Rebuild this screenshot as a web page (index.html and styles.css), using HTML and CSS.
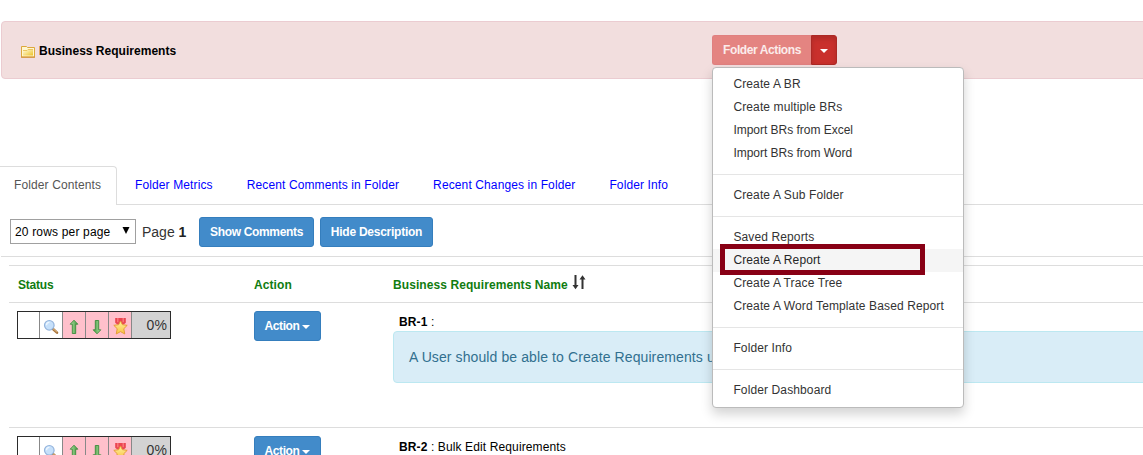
FILE: index.html
```html
<!DOCTYPE html>
<html lang="en">
<head>
<meta charset="utf-8">
<title>Business Requirements</title>
<link rel="stylesheet" href="styles.css">
</head>
<body>
<svg class="defs" width="0" height="0" aria-hidden="true">
  <defs>
    <linearGradient id="gold" x1="0" y1="0" x2="1" y2="1"><stop offset="0" stop-color="#fffbe0"/><stop offset="1" stop-color="#edc327"/></linearGradient>
    <linearGradient id="green" x1="0" y1="0" x2="1" y2="0"><stop offset="0" stop-color="#b4e0a4"/><stop offset="1" stop-color="#3e9a3c"/></linearGradient>
    <linearGradient id="star" x1="0" y1="0" x2="0" y2="1"><stop offset="0" stop-color="#fff3a0"/><stop offset="1" stop-color="#f9c040"/></linearGradient>
    <symbol id="i-zoom" viewBox="0 0 16 16">
      <path d="M10 10l4 3.6" stroke="#a8743c" stroke-width="2.6" stroke-linecap="round"/>
      <path d="M10 9.6l3.6 3.2" stroke="#e3bd85" stroke-width="1" stroke-linecap="round"/>
      <circle cx="6.3" cy="6.3" r="4.8" fill="#c6e0fa" stroke="#94b4dc" stroke-width="1.2"/>
      <path d="M3.4 6.2a3 3 0 0 1 3-2.8" stroke="#eef7ff" stroke-width="1.4" fill="none"/>
    </symbol>
    <symbol id="i-arrow" viewBox="0 0 16 16">
      <path d="M8 1.200L11.800 5.200H9.700v9.300H6.300V5.200H4.200z" fill="url(#green)" stroke="#3d8a3c" stroke-width=".9" stroke-linejoin="round"/>
    </symbol>
    <symbol id="i-medal" viewBox="0 0 16 16">
      <path d="M3 0h10v4.500l-2 1.500H5L3 4.500z" fill="#ea4652"/>
      <path d="M5.500 0v4M10.500 0v4" stroke="#ff8a88" stroke-width="1"/>
      <path d="M8 2.800l1.800 3.500 4.500.6-3.200 3.200.9 4.900L8 12.800 4 15l.9-4.900L1.700 6.900l4.500-.6z" fill="url(#star)" stroke="#e49a34" stroke-width=".9" stroke-linejoin="round"/>
    </symbol>
  </defs>
</svg>

<header class="panel">
  <h1 class="panel-title">
    <svg class="folder" width="14" height="13" viewBox="0 0 14 13">
      <path d="M.5 1.500h5l1 1h7v9.500H.5z" fill="#fff6cf" stroke="#dca83c"/>
      <path d="M2 10.500V5.500h4l1-1h5v6z" fill="url(#gold)"/>
      <path d="M2 5.500h4l1-1h5" fill="none" stroke="#ecc560"/>
      <path d="M0 12.200h14" stroke="#d08b2c"/>
    </svg>
    <span>Business Requirements</span>
  </h1>
  <div class="btn-group">
    <button class="btn danger faded">Folder Actions</button>
    <button class="btn danger toggle"><i class="caret"></i></button>
    <ul class="menu">
      <li>Create A BR</li>
      <li>Create multiple BRs</li>
      <li class="tight">Import BRs from Excel</li>
      <li class="tight">Import BRs from Word</li>
      <li class="divider"></li>
      <li>Create A Sub Folder</li>
      <li class="divider"></li>
      <li>Saved Reports</li>
      <li class="hover">Create A Report<span class="marker"></span></li>
      <li>Create A Trace Tree</li>
      <li>Create A Word Template Based Report</li>
      <li class="divider"></li>
      <li>Folder Info</li>
      <li class="divider"></li>
      <li>Folder Dashboard</li>
    </ul>
  </div>
</header>

<nav class="tabs">
  <a class="tab active">Folder Contents</a>
  <a class="tab">Folder Metrics</a>
  <a class="tab">Recent Comments in Folder</a>
  <a class="tab">Recent Changes in Folder</a>
  <a class="tab">Folder Info</a>
</nav>

<div class="toolbar">
  <div class="select"><span>20 rows per page</span><svg width="8" height="7" viewBox="0 0 8 7"><path d="M.5 0h7L4 7z"/></svg></div>
  <span class="page">Page <b>1</b></span>
  <button class="btn primary show">Show Comments</button>
  <button class="btn primary hide">Hide Description</button>
</div>

<main class="table">
  <div class="row head">
    <div class="status-head">Status</div>
    <div>Action</div>
    <div class="name-head">Business Requirements Name
      <svg width="14" height="15" viewBox="0 0 14 15"><path d="M3.500 0v12M10.500 14V2" stroke="#333" stroke-width="2"/><path d="M.5 10h6L3.500 14.200zM7.500 4.500h6L10.500 .3z" fill="#333"/></svg>
    </div>
  </div>
  <div class="row">
    <div>
      <div class="status">
        <span></span>
        <span><svg width="16" height="16"><use href="#i-zoom"/></svg></span>
        <span class="pink"><svg width="16" height="16"><use href="#i-arrow"/></svg></span>
        <span class="pink"><svg class="down" width="16" height="16"><use href="#i-arrow"/></svg></span>
        <span class="pink"><svg width="17" height="17"><use href="#i-medal"/></svg></span>
        <span class="pct">0%</span>
      </div>
    </div>
    <div><button class="btn primary action">Action <i class="caret"></i></button></div>
    <div>
      <div class="req"><b>BR-1</b> :</div>
      <div class="info">A User should be able to Create Requirements using</div>
    </div>
  </div>
  <div class="row">
    <div>
      <div class="status">
        <span></span>
        <span><svg width="16" height="16"><use href="#i-zoom"/></svg></span>
        <span class="pink"><svg width="16" height="16"><use href="#i-arrow"/></svg></span>
        <span class="pink"><svg class="down" width="16" height="16"><use href="#i-arrow"/></svg></span>
        <span class="pink"><svg width="17" height="17"><use href="#i-medal"/></svg></span>
        <span class="pct">0%</span>
      </div>
    </div>
    <div><button class="btn primary action">Action <i class="caret"></i></button></div>
    <div><div class="req"><b>BR-2</b> : Bulk Edit Requirements</div></div>
  </div>
</main>
</body>
</html>
```
FILE: styles.css
```css
* { box-sizing: border-box; }
html, body { height: 100%; }
body {
  margin: 0;
  overflow: hidden;
  background: #fff;
  color: #000;
  font: 12px/20px "Liberation Sans", Arial, sans-serif;
  letter-spacing: 0.12px;
}
.defs { position: absolute; }
.panel {
  display: flex;
  height: 58px;
  margin: 21px -10px 87px 1px;
  padding: 13px 0 0 19px;
  background: #f2dede;
  border: 1px solid #ebccd1;
  border-radius: 4px;
}
.panel-title {
  display: flex;
  width: 691px;
  margin: 0;
  padding-top: 6px;
  font-size: 12px;
  line-height: 20px;
  letter-spacing: 0.02px;
}
.folder { margin: 4px 4px 0 0; }
.btn-group { position: relative; display: flex; height: 30px; }
.btn {
  display: flex;
  align-items: center;
  justify-content: center;
  height: 30px;
  padding: 0;
  border: 1px solid #357ebd;
  border-radius: 3px;
  background: #428bca;
  color: #fff;
  font: bold 12px/18px "Liberation Sans", Arial, sans-serif;
  letter-spacing: -0.33px;
}
.danger { background: #c9302c; border-color: #ac2925; }
.faded {
  width: 99px;
  background: #e48481;
  border-color: #e08080;
  border-right: 0;
  border-radius: 3px 0 0 3px;
  color: #fbeceb;
  letter-spacing: -0.4px;
}
.toggle {
  width: 26px;
  border-radius: 0 3px 3px 0;
  box-shadow: inset 0 3px 5px rgba(0, 0, 0, .125);
}
.caret {
  width: 0;
  height: 0;
  margin-top: 2px;
  border: 4px solid transparent;
  border-top-color: #fff;
  border-bottom: 0;
}
.menu {
  position: absolute;
  z-index: 2;
  top: 32px;
  left: 0;
  width: 252px;
  margin: 0;
  padding: 5px 0;
  list-style: none;
  background: #fff;
  border: 1px solid #bbb;
  border-radius: 4px;
  box-shadow: 0 6px 12px rgba(0, 0, 0, .175);
  color: #333;
  letter-spacing: 0.12px;
}
.menu li { position: relative; height: 23px; padding-left: 20.4px; line-height: 22px; white-space: nowrap; }
.menu .tight { letter-spacing: -0.02px; }
.menu .divider { height: 1px; margin: 9px 0; background: #e5e5e5; }
.menu .hover { z-index: 1; background: #f5f5f5; color: #262626; }
.marker { position: absolute; left: 7px; top: -5px; width: 205px; height: 31px; border: 5px solid #880015; }

.tabs { display: flex; height: 39px; margin-left: -1px; border-bottom: 1px solid #ddd; }
.tab {
  height: 38px;
  margin-right: 2px;
  padding: 8px 15px 0;
  border: 1px solid transparent;
  border-bottom: 0;
  color: #00f;
  white-space: nowrap;
}
.tab.active {
  width: 118px;
  height: 39px;
  padding: 8px 0 0 14px;
  background: #fff;
  border-color: #ddd;
  border-radius: 0 4px 0 0;
  color: #555;
}
.toolbar {
  display: flex;
  height: 52px;
  margin-left: 1px;
  padding: 12px 0 0 9px;
  border-bottom: 1px solid #ddd;
}
.select {
  display: flex;
  align-items: center;
  justify-content: space-between;
  width: 126px;
  height: 25px;
  margin: 2px 6px 0 0;
  padding: 0 5px 2px 4px;
  border: 1px solid #a0a0a0;
  letter-spacing: 0.17px;
}
.select span { padding-top: 2px; }
.page { width: 57px; margin-top: 5px; color: #333; font-size: 14px; letter-spacing: 0; }
.page b { color: #222; }
.show { width: 115px; margin-right: 6px; }
.hide { width: 113px; letter-spacing: -0.25px; }

.table { margin: 8px 0 0 9px; }
.row {
  display: grid;
  grid-template-columns: 237px 139px 1fr;
  height: 125px;
  border-top: 1px solid #ddd;
}
.row:last-child { height: 28px; overflow: hidden; }
.row > div { padding: 8px 0 0 8px; }
.head { height: 37px; color: #107c10; font-weight: bold; letter-spacing: 0.08px; }
.head > div { padding-top: 9px; }
.head .status-head { padding-left: 9px; letter-spacing: -0.2px; }
.name-head { display: flex; gap: 4px; }
.status {
  display: grid;
  grid-template-columns: 22px 23px 23px 23px 23px 38px;
  width: 154px;
  height: 28px;
  border: 1px solid #2b2b2b;
}
.status span {
  display: flex;
  align-items: center;
  justify-content: center;
  padding-top: 3px;
  border-right: 1px solid #888;
}
.status .pink { background: #ffc0cb; }
.status .pct {
  justify-content: flex-end;
  padding: 0 3px 0 0;
  border: 0;
  background: #d3d3d3;
  color: #333;
  font-size: 14px;
}
.down { transform: rotate(180deg); }
.action { gap: 3px; width: 67px; letter-spacing: -0.4px; }
.req { height: 20px; padding: 1px 0 0 6px; white-space: nowrap; }
.info {
  height: 52px;
  margin-right: -10px;
  padding: 15px;
  background: #d9edf7;
  border: 1px solid #bce8f1;
  border-radius: 4px;
  color: #31708f;
  font-size: 14px;
  letter-spacing: 0.1px;
  white-space: nowrap;
}
```
